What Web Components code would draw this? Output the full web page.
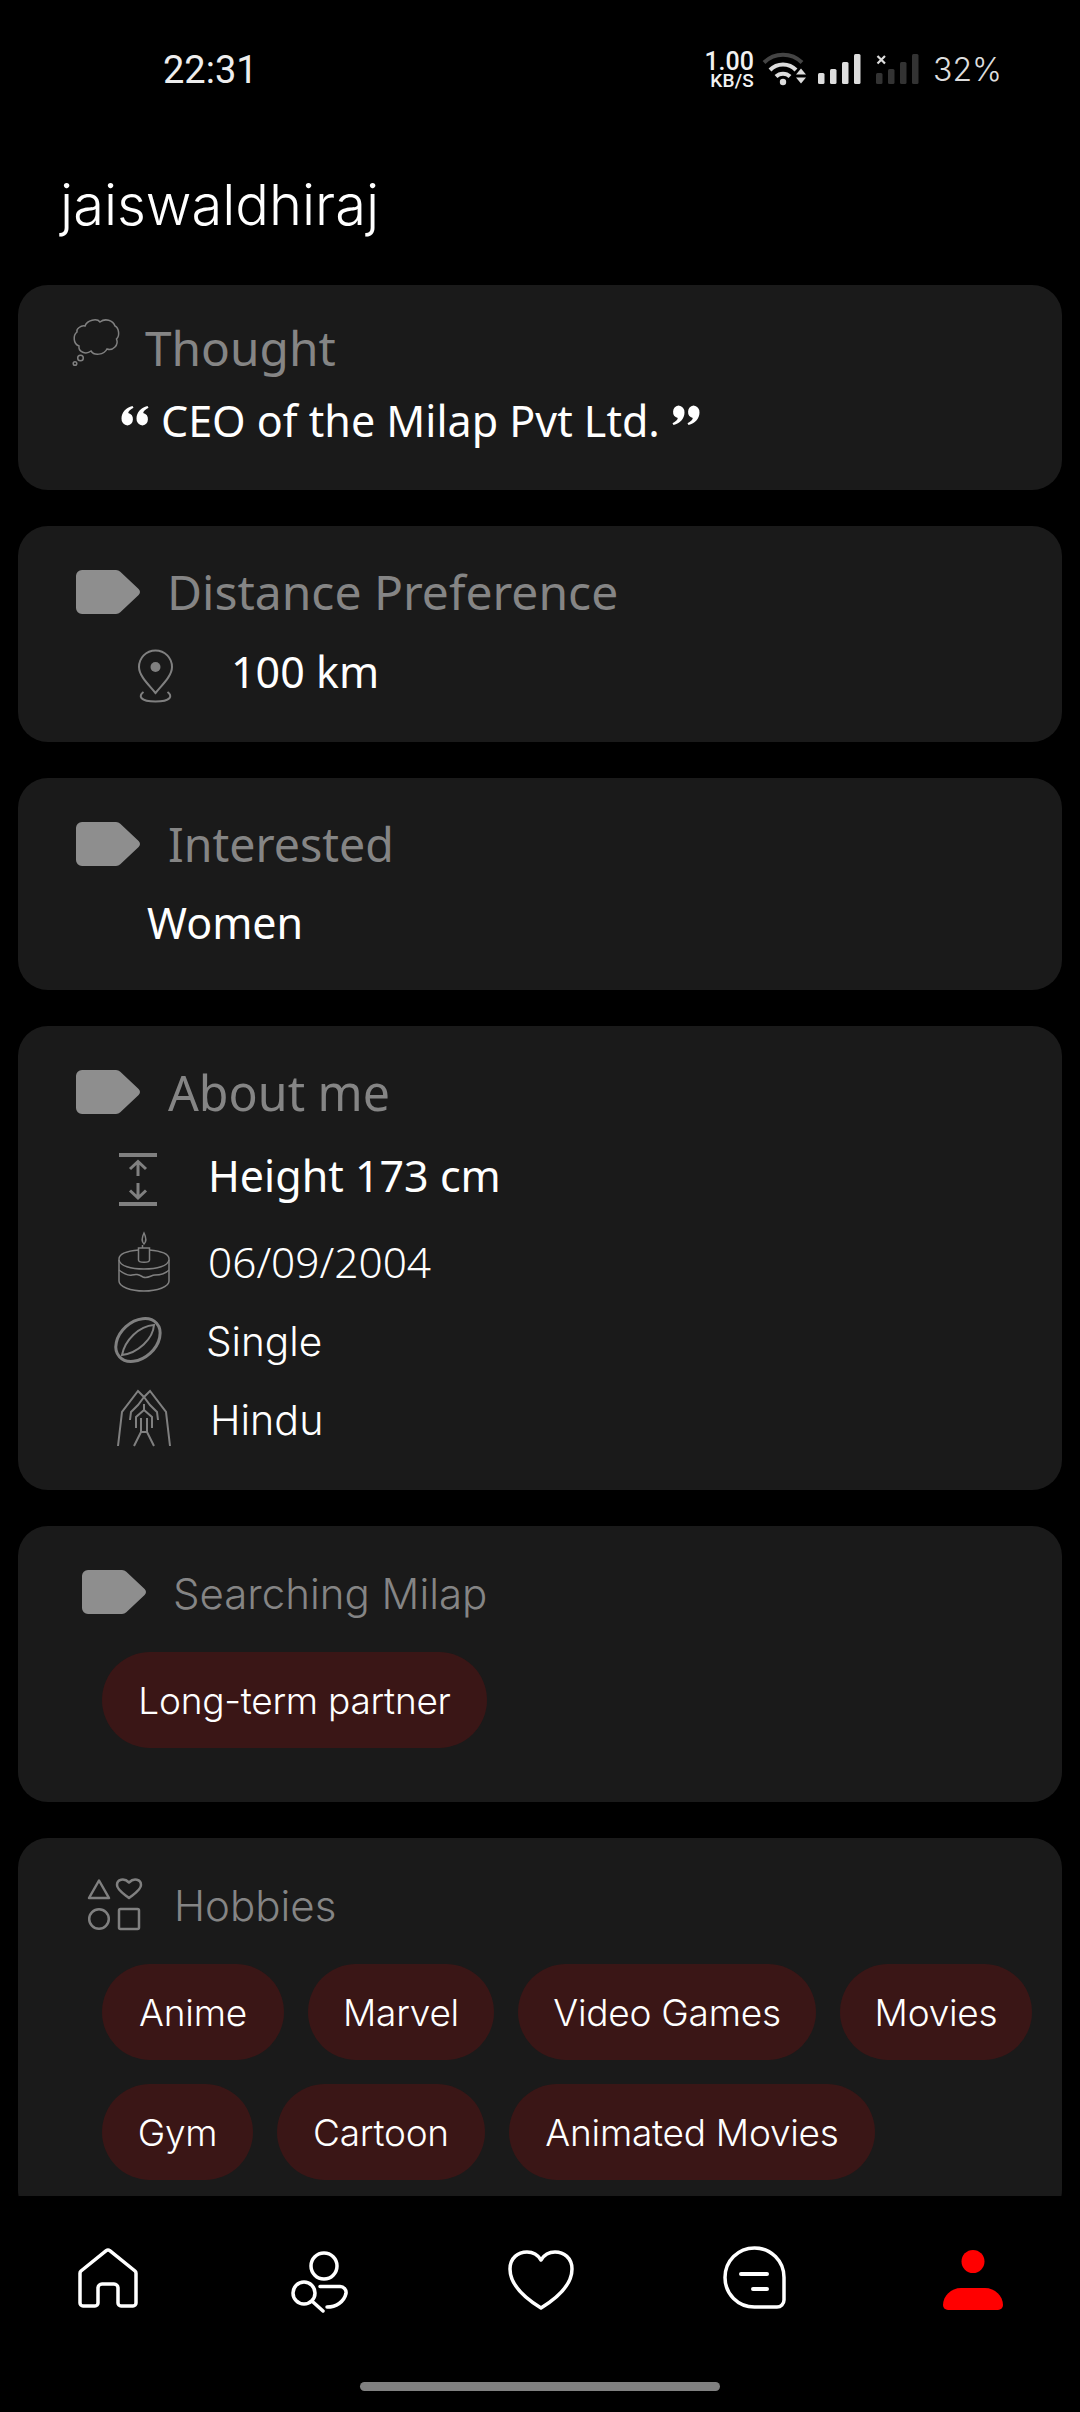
<!DOCTYPE html>
<html lang="en"><head><meta charset="utf-8"><title>Profile</title>
<style>
html,body{margin:0;padding:0;background:#000;}
body{width:1080px;height:2412px;overflow:hidden;font-family:"Noto Sans","Open Sans",sans-serif;color:#fff;}
</style></head>
<body>
<app-screen>
  <status-bar slot="status"></status-bar>
  <screen-title slot="title">jaiswaldhiraj</screen-title>

  <info-card style="--pb:41px;--pt:33px">
    <card-header icon="thought" style="--x:54px;--gap:25px;--h:60px;--lh:60px;--fs:47.800px">Thought</card-header>
    <quote-line>CEO of the Milap Pvt Ltd.</quote-line>
  </info-card>

  <info-card style="--pb:40px">
    <card-header icon="tag" style="--gap:27px">Distance Preference</card-header>
    <info-row icon="pin" style="--mt:28px;--x:119px;--col:94px;--iy:7px">100 km</info-row>
  </info-card>

  <info-card style="--pb:37px">
    <card-header icon="tag" style="--gap:28px;--fs:46.500px">Interested</card-header>
    <info-row style="--mt:27px;--x:129px;--col:0px">Women</info-row>
  </info-card>

  <info-card style="--pb:40px">
    <card-header icon="tag" style="--gap:28px;--fs:48.300px">About me</card-header>
    <info-row icon="height" style="--mt:32px;--x:101px;--col:89px;--iy:7px">Height 173 cm</info-row>
    <info-row icon="cake" style="--mt:26px;--x:100px;--col:90px;--iy:0px;--w:300;--fs:42.400px">06/09/2004</info-row>
    <info-row icon="ring" style="--mt:20px;--x:97px;--col:91px;--iy:5px;--ff:Inter;--w:300;--fs:40.500px">Single</info-row>
    <info-row icon="hands" style="--mt:18px;--x:99px;--col:93px;--iy:-1px;--ff:Inter;--w:300;--fs:41.200px">Hindu</info-row>
  </info-card>

  <info-card style="--pb:54px">
    <card-header icon="tag" style="--x:64px;--gap:27px;--ff:Inter;--fs:42px;--lh:48px;--w:300">Searching Milap</card-header>
    <chip-list style="--mt:38px">
      <tag-chip style="--cw:385px">Long-term partner</tag-chip>
    </chip-list>
  </info-card>

  <info-card style="--pb:40px;--pt:40px;--mb:0">
    <card-header icon="hobbies" style="--x:70px;--gap:32px;--h:52px;--lh:56px;--ff:Inter;--fs:42px;--w:300">Hobbies</card-header>
    <chip-list style="--mt:34px">
      <tag-chip style="--cw:182px">Anime</tag-chip><tag-chip style="--cw:186px">Marvel</tag-chip><tag-chip style="--cw:298px">Video Games</tag-chip><tag-chip style="--cw:192px">Movies</tag-chip>
      <tag-chip style="--cw:151px">Gym</tag-chip><tag-chip style="--cw:208px">Cartoon</tag-chip><tag-chip style="--cw:366px">Animated Movies</tag-chip>
    </chip-list>
  </info-card>

  <nav-bar slot="nav"></nav-bar>
</app-screen>

<script>
const Q66 = `<path d="M6.500 19.500A6.500 6.500 0 0 1 .5 12.500C.5 6.500 5 1.500 11.500 0L12.500 1.800C9.500 3.300 7.500 5 7.200 7A6.400 6.400 0 0 1 6.500 19.500Z"/><path d="M21.500 19.500A6.500 6.500 0 0 1 15.500 12.500C15.500 6.500 20 1.500 26.500 0L27.500 1.800C24.500 3.300 22.500 5 22.200 7A6.400 6.400 0 0 1 21.500 19.500Z"/>`;
const ICONS = {
  tag:{w:64,h:44,svg:`<path fill="#8e8e8e" d="M6 0H40a6 6 0 0 1 4.3 1.8L62.6 19a4.4 4.4 0 0 1 0 6L44.3 42.2A6 6 0 0 1 40 44H6a6 6 0 0 1-6-6V6a6 6 0 0 1 6-6z"/>`},
  qopen:{w:28,h:20,svg:`<g fill="#fff">${Q66}</g>`},
  qclose:{w:28,h:20,svg:`<g fill="#fff" transform="rotate(180 14 10)">${Q66}</g>`},
  thought:{w:48,h:48,svg:`<g fill="none" stroke="#808080" stroke-width="1.5"><path d="M13 8C15 2 25 0 28 4C33 0 41 2 43 8C47 10 48 18 44.500 21C47 27 41 33 35 31C32 37 22 38 19 33C14 37 6 34 7 28C1 26 1 17 5 14C4 11 9 7 13 8Z"/><circle cx="8.500" cy="40" r="2.800"/><circle cx="3" cy="45.500" r="1.800"/></g>`},
  pin:{w:37,h:54,svg:`<g fill="none" stroke="#808080" stroke-width="2"><path d="M18.500 1.500C9 1.500 2 9 2 18C2 27 12 36 18.500 44C25 36 35 27 35 18C35 9 28 1.500 18.500 1.500Z"/><path d="M6.500 43C1 47 3 52.500 18.500 52.500C34 52.500 36 47 30.500 43"/></g><circle cx="18.500" cy="18" r="5" fill="#808080"/>`},
  height:{w:38,h:53,svg:`<g fill="none" stroke="#808080" stroke-width="3"><path stroke-width="4" d="M0 2H38M0 51H38"/><path d="M19 9V23M11 16L19 8.500L27 16M19 30V45M11 37.500L19 45L27 37.500"/></g>`},
  cake:{w:52,h:60,svg:`<g fill="none" stroke="#808080" stroke-width="1.500"><path d="M21 18C9 19 1 22 1 27V49C1 55 13 59 26 59C39 59 51 55 51 49V27C51 22 43 19 31 18"/><path d="M1 28C2 34 13 37 26 37C39 37 50 34 51 28"/><path d="M1 38C6 42 10 44 14 43C18 42 20 42 25 45C30 47 33 43 37 43C42 43 47 42 51 38"/><path d="M20.500 16H31.500V28C31.500 31 20.500 31 20.500 28Z"/><path d="M24.500 16V13M26 12C23 9 24 5 26 1C28 5 29 9 26 12Z"/></g>`},
  ring:{w:46,h:46,svg:`<g fill="none" stroke="#808080"><ellipse cx="23" cy="23" rx="25" ry="18" transform="rotate(-42 23 23)" stroke-width="3"/><path stroke-width="2" d="M7 38C10 23 24 9 39 8C38 22 23 36 7 38Z"/></g>`},
  hands:{w:54,h:56,svg:`<g fill="none" stroke="#808080" stroke-width="2"><path d="M1 56L5 22L21 1L27 7L33 1L49 22L53 56"/><path d="M27 7L21 15L14 22L13 30M27 7L33 15L40 22L41 30"/><path d="M27 14V20L19 27V38M27 20L35 27V38M24 28V42L17 56M30 28V42L37 56M24 42H30"/></g>`},
  hobbies:{w:54,h:52,svg:`<g fill="none" stroke="#808080" stroke-width="2.500" stroke-linejoin="round"><path d="M11 2.500L21 20H1Z"/><path d="M41 20C36 16 29 12 29 7C29 1.500 36 -0.500 41 4.500C46 -0.500 53 1.500 53 7C53 12 46 16 41 20Z"/><circle cx="11" cy="41" r="9.800"/><rect x="31" y="31" width="20" height="20" rx="1.500"/></g>`},
  /* nav icons share an 80x80 box */
  home:{w:80,h:80,svg:`<g transform="translate(11 9)" fill="none" stroke="#fff" stroke-width="3.500"><path d="M27.200 1.600a3 3 0 0 1 3.600 0L56 22a3 3 0 0 1 1 2.400V54a3 3 0 0 1-3 3H42a3 3 0 0 1-3-3V39a4 4 0 0 0-4-4H23a4 4 0 0 0-4 4V54a3 3 0 0 1-3 3H4a3 3 0 0 1-3-3V24.400A3 3 0 0 1 2 22Z"/></g>`},
  search:{w:80,h:80,svg:`<g transform="translate(-284 -2240)" fill="none" stroke="#fff" stroke-width="3.500" stroke-linecap="round"><circle cx="324" cy="2266" r="13"/><circle cx="304" cy="2293" r="11"/><path d="M313 2302L323 2311M320 2286.500H340a6 6 0 0 1 6 7C344 2302 336 2307 327 2307"/></g>`},
  heart:{w:80,h:80,svg:`<g transform="translate(8 10)" fill="none" stroke="#fff" stroke-width="3.500" stroke-linejoin="round"><path d="M33 58C20 50 2 36 2 19C2 8 10 2 19 2C25 2 30 5 33 10C36 5 41 2 47 2C56 2 64 8 64 19C64 36 46 50 33 58Z"/></g>`},
  chat:{w:80,h:80,svg:`<g transform="translate(7 6)" fill="none" stroke="#fff" stroke-width="3.500" stroke-linecap="round"><path d="M31.500 2C48 2 61 15 61 31.500V54a7 7 0 0 1-7 7H31.500C15 61 2 48 2 31.500C2 15 15 2 31.500 2Z"/><path stroke-width="4" d="M18 28H44M30 43H44"/></g>`},
  profile:{w:80,h:80,svg:`<g transform="translate(11 10)" fill="#f00"><circle cx="30" cy="11.500" r="11.500"/><path d="M18 38H42C52 38 60 46 60 55a5 5 0 0 1-5 5H5a5 5 0 0 1-5-5C0 46 8 38 18 38Z"/></g>`},
  wifi:{w:45,h:33,svg:`<g fill="none" stroke-width="4"><path stroke="#444" d="M1 10.500A27 27 0 0 1 39 10.500"/><path stroke="#ddd" d="M7 18A18 18 0 0 1 33 18M13 24.500A10 10 0 0 1 27 24.500"/></g><circle cx="20" cy="30" r="3.200" fill="#ddd"/><path fill="#ddd" d="M33 22.500L38 16.500L43 22.500ZM33 25.500H43L38 31.500Z"/>`},
  bars:{w:43,h:30,svg:`<g fill="#ddd"><rect x="0" y="19" width="6.500" height="11" rx="1.500"/><rect x="12" y="15" width="6.500" height="15" rx="1.500"/><rect x="24" y="8" width="6.500" height="22" rx="1.500"/><rect x="36" y="0" width="6.500" height="30" rx="1.500"/></g>`},
  barsoff:{w:43,h:30,svg:`<g fill="#333"><rect x="0" y="19" width="6.500" height="11" rx="1.500"/><rect x="12" y="15" width="6.500" height="15" rx="1.500"/><rect x="24" y="8" width="6.500" height="22" rx="1.500"/><rect x="36" y="0" width="6.500" height="30" rx="1.500"/></g><path stroke="#ddd" stroke-width="2.200" d="M1.500 2L9 9.500M9 2L1.500 9.500"/>`}
};

function define(name, html, init){
  const tpl = document.createElement('template');
  tpl.innerHTML = html;
  customElements.define(name, class extends HTMLElement{
    constructor(){ super(); this.attachShadow({mode:'open'}).appendChild(tpl.content.cloneNode(true)); }
    connectedCallback(){ if(init) init(this, this.shadowRoot); }
  });
}

class AppIcon extends HTMLElement{
  constructor(){ super(); this.attachShadow({mode:'open'}); }
  connectedCallback(){
    const i = ICONS[this.getAttribute('name')];
    if(!i) return;
    this.shadowRoot.innerHTML = `<style>:host{display:block;line-height:0;flex:none}svg{display:block;overflow:visible}</style>
      <svg xmlns="http://www.w3.org/2000/svg" width="${i.w}" height="${i.h}" viewBox="0 0 ${i.w} ${i.h}">${i.svg}</svg>`;
  }
}
customElements.define('app-icon', AppIcon);

define('app-screen', `<style>
  :host{display:flex;flex-direction:column;width:1080px;height:2412px;background:#000;overflow:hidden}
  .scroll{height:1911px;overflow:hidden;padding:0 18px;box-sizing:border-box;flex:none}
</style>
<slot name="status"></slot><slot name="title"></slot>
<div class="scroll"><slot></slot></div>
<slot name="nav"></slot>`);

define('status-bar', `<style>
  :host{display:flex;flex:none;justify-content:space-between;align-items:flex-start;height:155px;box-sizing:border-box;padding:50px 78px 0 163px;font-family:Roboto,sans-serif;color:#eee}
  .time{font-size:38px;line-height:40px;font-weight:400}
  .right{display:flex;align-items:flex-start}
  .net{width:59px;display:flex;flex-direction:column;align-items:flex-end;padding-right:9px;box-sizing:border-box;font-weight:500;color:#f2f2f2}
  .net b{font-weight:500;font-size:25px;line-height:22px;padding-top:1px}
  .net i{font-style:normal;font-size:19px;line-height:16px;letter-spacing:.2px}
  .wifi{margin:2px 10px 0 0}
  .b1{margin:4px 15px 0 0}
  .b2{margin:4px 14px 0 0}
  .pct{font-size:32px;line-height:40px;font-weight:300;color:#ddd;font-family:Inter,sans-serif}
</style>
<div class="time">22:31</div>
<div class="right">
  <div class="net"><b>1.00</b><i>KB/S</i></div>
  <app-icon class="wifi" name="wifi"></app-icon>
  <app-icon class="b1" name="bars"></app-icon>
  <app-icon class="b2" name="barsoff"></app-icon>
  <div class="pct">32%</div>
</div>`);

define('screen-title', `<style>
  :host{display:block;flex:none;height:130px;padding-left:60px;box-sizing:border-box;font:300 56px/100px Inter,sans-serif;color:#fff}
</style><slot></slot>`);

define('info-card', `<style>
  :host{display:block;background:#1a1a1a;border-radius:30px;box-sizing:border-box;padding:var(--pt,44px) 0 var(--pb,40px);margin-bottom:var(--mb,36px)}
</style><slot></slot>`);

define('card-header', `<style>
  :host{display:flex;align-items:flex-start;height:var(--h,44px);padding-left:var(--x,58px);color:#858585;font-family:var(--ff,"Noto Sans"),sans-serif;font-size:var(--fs,48px);font-weight:var(--w,400);line-height:var(--lh,44px);white-space:nowrap}
  .t{margin-left:var(--gap,29px)}
</style><div class="ic"></div><span class="t"><slot></slot></span>`, (el, s) => {
  const box = s.querySelector('.ic');
  if(box.firstChild) return;
  const ic = document.createElement('app-icon'); ic.setAttribute('name', el.getAttribute('icon')); box.appendChild(ic);
});

define('info-row', `<style>
  :host{display:flex;align-items:flex-start;height:60px;margin-top:var(--mt,0);padding-left:var(--x,0);font-family:var(--ff,"Noto Sans"),sans-serif;font-size:var(--fs,43px);font-weight:var(--w,400);line-height:60px;color:#fff;white-space:nowrap}
  .ic{width:var(--col,0);flex:none;padding-top:var(--iy,0)}
</style><div class="ic"></div><span><slot></slot></span>`, (el, s) => {
  const n = el.getAttribute('icon'); const box = s.querySelector('.ic');
  if(!n || box.firstChild) return;
  const ic = document.createElement('app-icon'); ic.setAttribute('name', n); box.appendChild(ic);
});

define('quote-line', `<style>
  :host{display:flex;align-items:flex-start;margin-top:15px;height:56px;padding-left:103px;font:400 43px/56px "Noto Sans",sans-serif;color:#fff;white-space:nowrap}
  .o{margin:13px 12px 0 0}.c{margin:12px 0 0 12px}
</style><app-icon class="o" name="qopen"></app-icon><span><slot></slot></span><app-icon class="c" name="qclose"></app-icon>`);

define('chip-list', `<style>
  :host{display:flex;flex-wrap:wrap;gap:24px;margin-top:var(--mt,0);padding-left:84px;padding-right:20px}
</style><slot></slot>`);

define('tag-chip', `<style>
  :host{display:flex;align-items:center;justify-content:center;box-sizing:border-box;width:var(--cw,auto);height:96px;padding-top:2px;border-radius:48px;background:#3a1616;color:#fff;font:300 37px/94px Inter,sans-serif;letter-spacing:-.25px;white-space:nowrap}
</style><slot></slot>`);

define('nav-bar', `<style>
  :host{display:block;flex:none;height:216px;box-sizing:border-box;padding-top:44px}
  .row{display:grid;grid-template-columns:repeat(5,216px);height:80px}
  .cell{display:flex;align-items:center;justify-content:center}
  .pill{width:360px;height:9px;border-radius:4.500px;background:#808080;margin:62px auto 0}
</style>
<div class="row">
  <div class="cell"><app-icon name="home"></app-icon></div>
  <div class="cell"><app-icon name="search"></app-icon></div>
  <div class="cell"><app-icon name="heart"></app-icon></div>
  <div class="cell"><app-icon name="chat"></app-icon></div>
  <div class="cell"><app-icon name="profile"></app-icon></div>
</div>
<div class="pill"></div>`);
</script>
</body></html>
